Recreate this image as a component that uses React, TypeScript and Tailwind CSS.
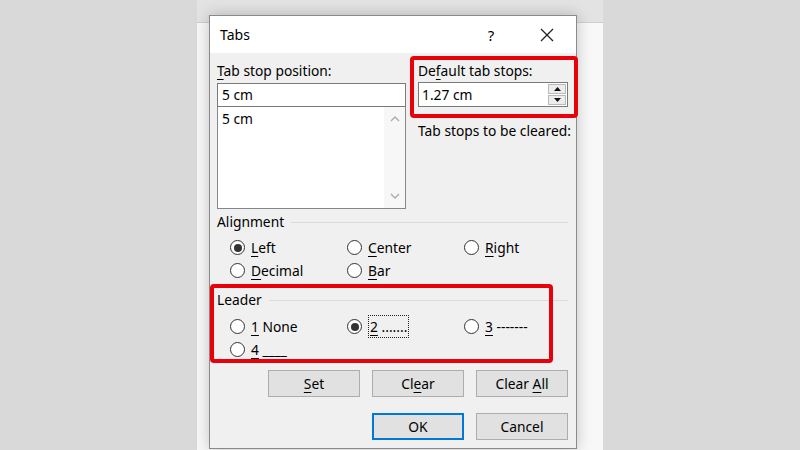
import React from "react";

const F = { fontFamily: '"Noto Sans", "Open Sans", Arial, sans-serif' };

const U = ({ children }: { children: React.ReactNode }) => (
  <span className="underline decoration-1 underline-offset-[3px]">{children}</span>
);

const Radio = ({ checked, children }: { checked?: boolean; children: React.ReactNode }) => (
  <div className="flex items-center gap-[6px] h-[23px]">
    <span className="w-[15px] h-[15px] rounded-full border border-[#333333] bg-white flex items-center justify-center shrink-0">
      {checked && <span className="w-[8px] h-[8px] rounded-full bg-[#333333]" />}
    </span>
    <span className="leading-4 whitespace-nowrap">{children}</span>
  </div>
);

const Heading = ({ children }: { children: React.ReactNode }) => (
  <div className="flex items-center h-4">
    <span>{children}</span>
    <div className="flex-1 ml-[7px] h-px bg-[#dcdcdc]" />
  </div>
);

const Btn = ({ children, primary }: { children: React.ReactNode; primary?: boolean }) => (
  <div
    className={
      "w-[92px] h-[27px] flex items-center justify-center bg-[#e1e1e1] " +
      (primary ? "border-2 border-[#0078d7]" : "border border-[#adadad]")
    }
  >
    <span className="whitespace-nowrap">{children}</span>
  </div>
);

export default function App() {
  return (
    <div className="w-[800px] h-[450px] bg-[#d9d9d9] overflow-hidden text-[13.8px] leading-4 text-black" style={F}>
      <div className="relative mx-auto w-[406px] h-[450px] bg-[#f8f8f8]">
        <div className="h-[23px] bg-[#e3e3e3] border-b border-[#cfcfcf]" />
        <div className="absolute left-[12px] top-[15px] w-[368px] h-[434px] border border-[#8a8a8a] bg-[#f0f0f0] shadow-[0_0_14px_rgba(0,0,0,0.22)] flex flex-col">
          {/* title bar */}
          <div className="h-[37px] bg-white flex items-center shrink-0">
            <span className="pl-[10px] text-[14px]">Tabs</span>
            <div className="ml-auto flex items-center">
              <div className="w-[46px] mr-[10px] text-center text-[15px]">?</div>
              <div className="w-[46px] mr-[6px] flex justify-center">
                <svg width="14" height="14" viewBox="0 0 14 14">
                  <path d="M1 1 L13 13 M13 1 L1 13" stroke="#222" strokeWidth="1.3" fill="none" />
                </svg>
              </div>
            </div>
          </div>

          {/* body */}
          <div className="flex-1 pl-[7px] pr-[8px] pt-[10px] flex flex-col">
            <div className="flex gap-[12px]">
              <div className="w-[189px] flex flex-col">
                <div className="h-4 leading-4 whitespace-nowrap">
                  <U>T</U>ab stop position:
                </div>
                <div className="mt-[4px] h-[24px] bg-white border border-[#7a7a7a] flex items-center pl-[4px]">5 cm</div>
                <div className="h-[102px] bg-white border border-t-0 border-[#828790] flex">
                  <div className="flex-1 pl-[4px] pt-[4px]">5 cm</div>
                  <div className="w-[21px] bg-[#f7f7f7] flex flex-col items-center justify-between py-[9px]">
                    <svg width="10" height="6" viewBox="0 0 10 6">
                      <path d="M1 5 L5 1 L9 5" stroke="#b0b0b0" strokeWidth="1.5" fill="none" />
                    </svg>
                    <svg width="10" height="6" viewBox="0 0 10 6">
                      <path d="M1 1 L5 5 L9 1" stroke="#b0b0b0" strokeWidth="1.5" fill="none" />
                    </svg>
                  </div>
                </div>
              </div>
              <div className="w-[150px] flex flex-col">
                <div className="h-4 leading-4 whitespace-nowrap">
                  De<U>f</U>ault tab stops:
                </div>
                <div className="mt-[3px] h-[25px] bg-white border border-[#7a7a7a] flex items-center">
                  <span className="flex-1 pl-[3px]">1.27 cm</span>
                  <div className="w-[18px] h-[21px] mr-[1px] flex flex-col gap-px">
                    <div className="flex-1 bg-[#ececec] border border-[#b9b9b9] flex items-center justify-center">
                      <svg width="7" height="4" viewBox="0 0 7 4"><path d="M0 4 L3.5 0 L7 4 Z" fill="#111" /></svg>
                    </div>
                    <div className="flex-1 bg-[#ececec] border border-[#b9b9b9] flex items-center justify-center">
                      <svg width="7" height="4" viewBox="0 0 7 4"><path d="M0 0 L3.5 4 L7 0 Z" fill="#111" /></svg>
                    </div>
                  </div>
                </div>
                <div className="mt-[16px] h-4 leading-4 whitespace-nowrap">Tab stops to be cleared:</div>
              </div>
            </div>

            <div className="mt-[5px]">
              <Heading>Alignment</Heading>
            </div>
            <div className="mt-[6px] grid grid-cols-[117px_117px_117px] pl-[13px]">
              <Radio checked>
                <U>L</U>eft
              </Radio>
              <Radio>
                <U>C</U>enter
              </Radio>
              <Radio>
                <U>R</U>ight
              </Radio>
              <Radio>
                <U>D</U>ecimal
              </Radio>
              <Radio>
                <U>B</U>ar
              </Radio>
            </div>

            <div className="mt-[10px]">
              <Heading>Leader</Heading>
            </div>
            <div className="mt-[7px] grid grid-cols-[117px_117px_117px] pl-[13px]">
              <Radio>
                <U>1</U> None
              </Radio>
              <Radio checked>
                <span className="border border-dotted border-[#222] px-[1px] py-[1px]">
                  <U>2</U> .......
                </span>
              </Radio>
              <Radio>
                <U>3</U> -------
              </Radio>
              <Radio>
                <U>4</U> ____
              </Radio>
            </div>

            <div className="mt-[9px] flex justify-end gap-[12px]">
              <Btn>
                <U>S</U>et
              </Btn>
              <Btn>
                Cl<U>e</U>ar
              </Btn>
              <Btn>
                Clear <U>A</U>ll
              </Btn>
            </div>
            <div className="mt-[16px] flex justify-end gap-[12px]">
              <Btn primary>OK</Btn>
              <Btn>Cancel</Btn>
            </div>
          </div>

          {/* annotation rectangles */}
          <div className="absolute left-[200px] top-[40px] w-[168px] h-[62px] border-[4px] border-[#e8000a] rounded-[4px]" />
          <div className="absolute left-0 top-[268px] w-[343px] h-[79px] border-[4px] border-[#e8000a] rounded-[4px]" />
        </div>
      </div>
    </div>
  );
}
